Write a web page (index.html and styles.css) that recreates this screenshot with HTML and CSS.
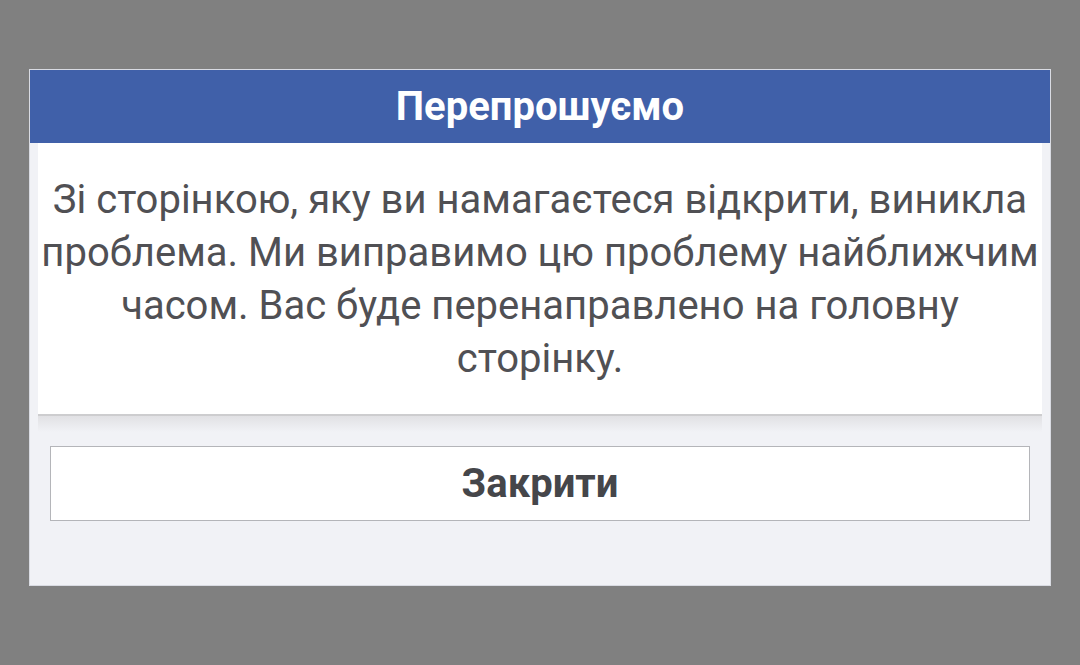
FILE: index.html
```html
<!DOCTYPE html>
<html lang="uk">
<head>
<meta charset="utf-8">
<link rel="stylesheet" href="styles.css">
</head>
<body>
<div class="dialog">
  <div class="header">Перепрошуємо</div>
  <div class="panel">
    <p class="message">Зі сторінкою, яку ви намагаєтеся відкрити, виникла проблема. Ми виправимо цю проблему найближчим часом. Вас буде перенаправлено на головну сторінку.</p>
  </div>
  <div class="shade"></div>
  <div class="actions">
    <button class="btn">Закрити</button>
  </div>
</div>
</body>
</html>
```
FILE: styles.css
```css
html, body {
  margin: 0;
  padding: 0;
}
body {
  background: #808080;
  width: 1080px;
  height: 665px;
  overflow: hidden;
  font-family: Roboto, "Liberation Sans", sans-serif;
}
.dialog {
  box-sizing: border-box;
  margin: 69px 0 0 29px;
  width: 1022px;
  height: 517px;
  background: #f1f2f6;
  border: 1px solid #d9dbe2;
}
.header {
  height: 73px;
  background: #4060a9;
  color: #ffffff;
  font-weight: bold;
  font-size: 40px;
  display: flex;
  align-items: center;
  justify-content: center;
}
.panel {
  margin: 0 8px;
  background: #ffffff;
  padding: 30px 0 29px;
  border-bottom: 2px solid #cdcdcf;
}
.message {
  margin: 0;
  text-align: center;
  font-size: 40px;
  line-height: 53px;
  color: #505054;
}
.shade {
  margin: 0 8px;
  height: 16px;
  background: linear-gradient(#e1e1e4, rgba(241, 242, 246, 0));
}
.actions {
  padding: 14px 20px 0;
}
.btn {
  display: block;
  box-sizing: border-box;
  width: 100%;
  height: 75px;
  background: #ffffff;
  border: 1px solid #b4b5b9;
  border-radius: 0;
  font-family: Roboto, "Liberation Sans", sans-serif;
  font-weight: bold;
  font-size: 40px;
  color: #45464a;
  padding: 0;
}
```
